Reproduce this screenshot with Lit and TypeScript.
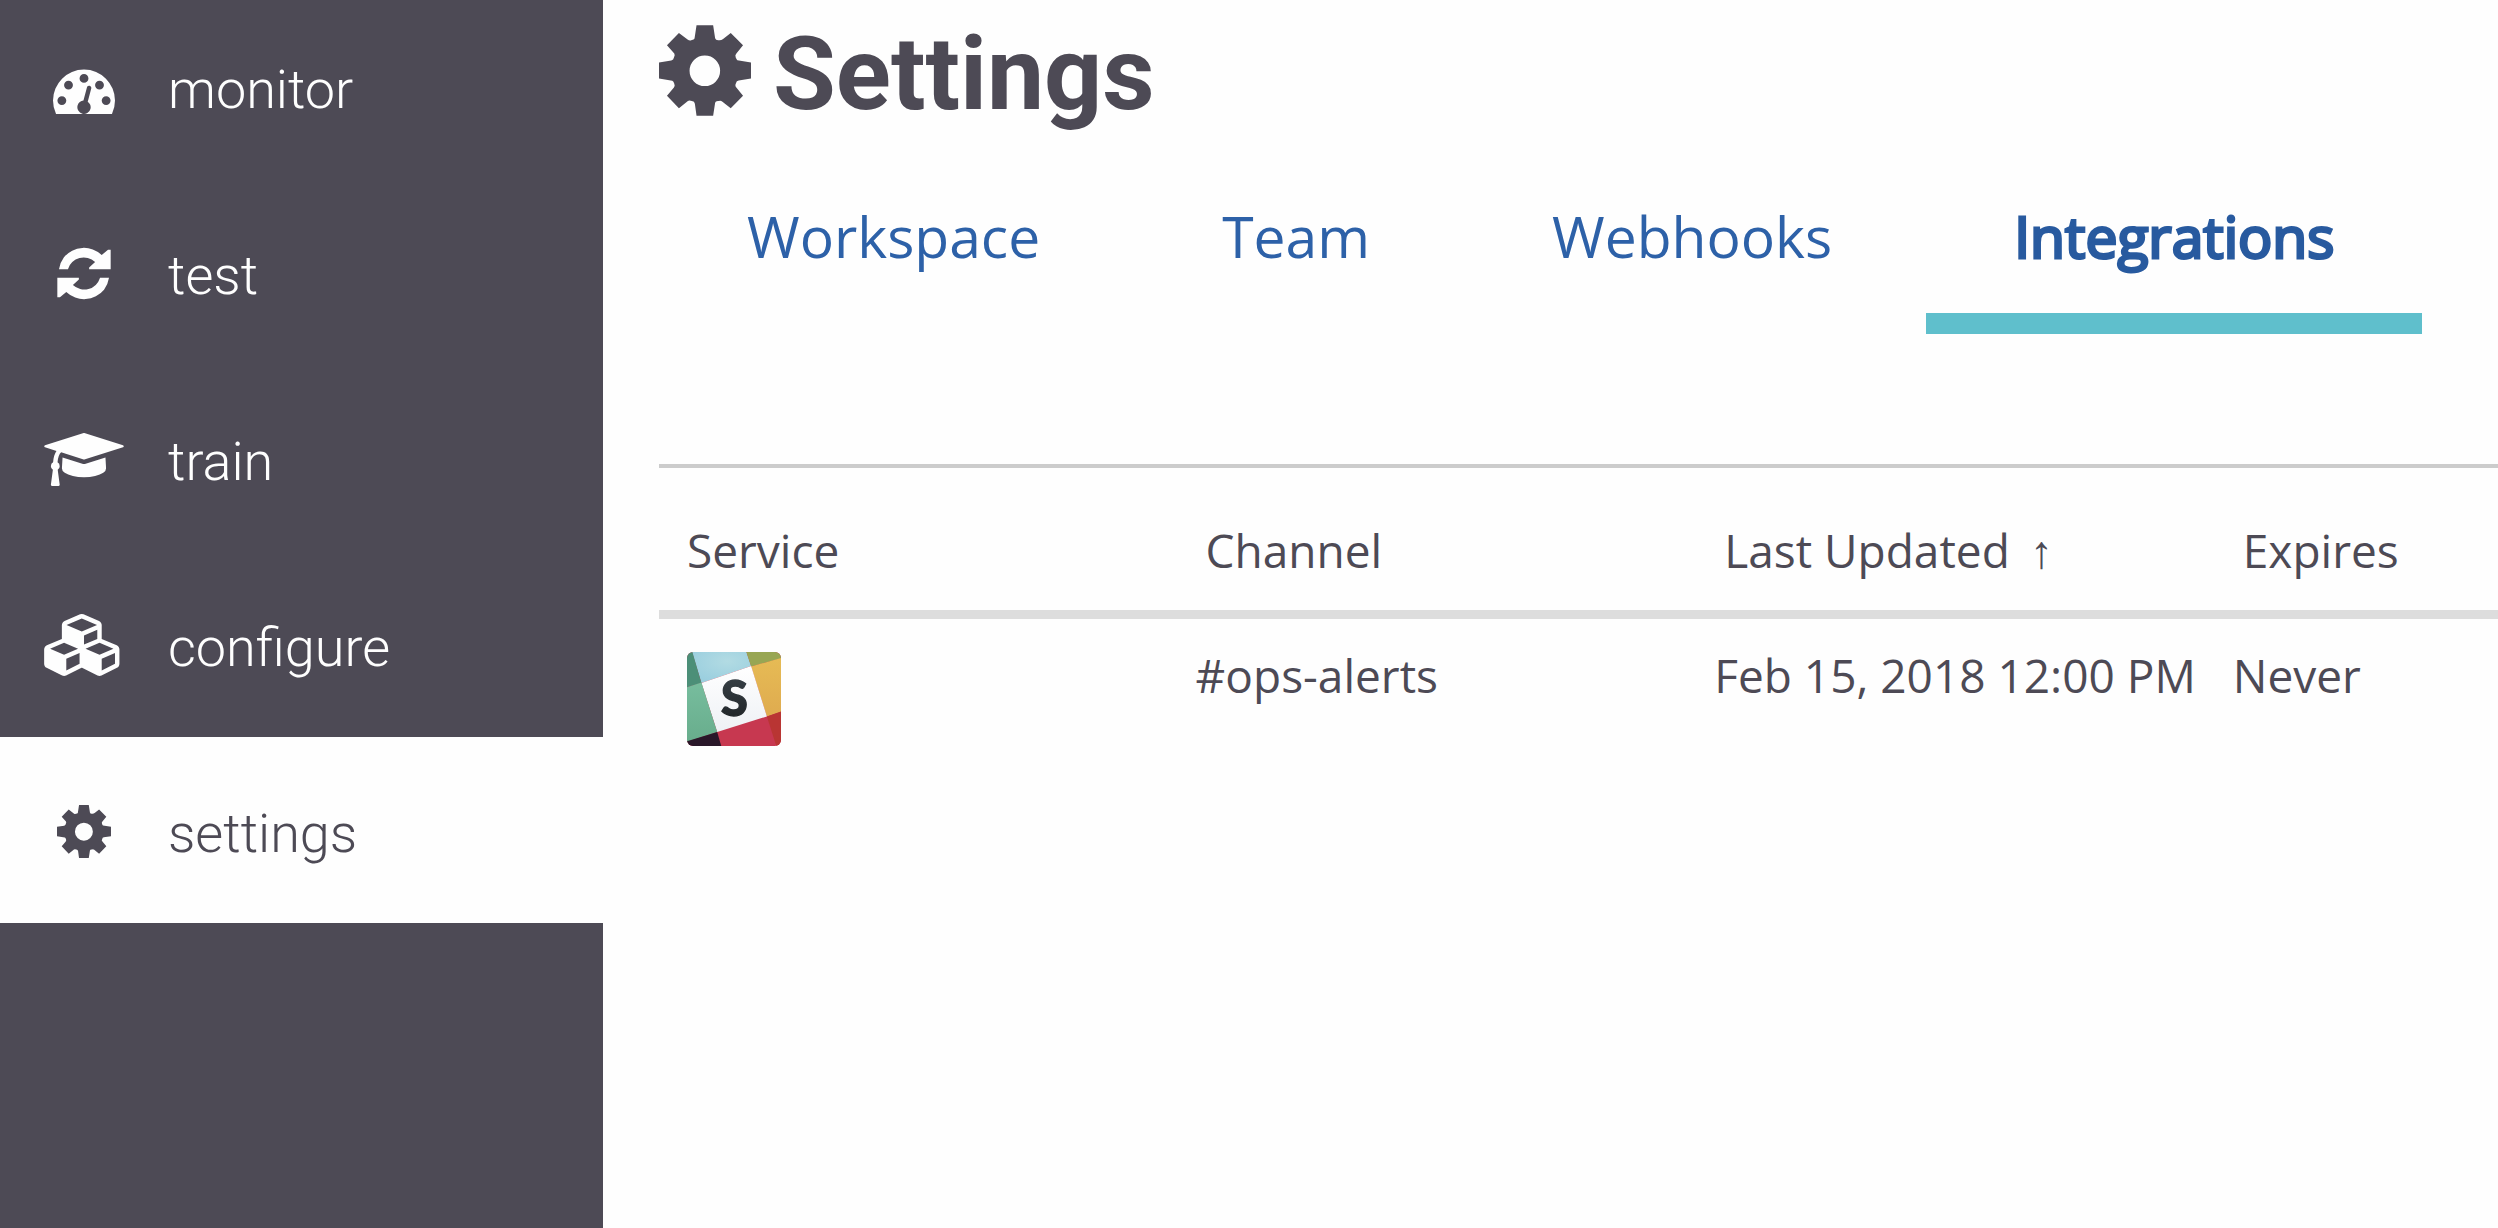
import { LitElement, html, css, svg } from "lit";
import { customElement, state } from "lit/decorators.js";
import { classMap } from "lit/directives/class-map.js";

const cogShape = svg`<path fill="currentColor" fill-rule="evenodd" d="M141 45H191L197 84Q199 91 208 90Q215 91 221 86L244 68L281 105L261 130Q256 135 259 142Q262 149 264 150L305 157V205L268 211Q261 212 260 219Q256 226 259 230L281 257L244 295L219 275Q214 271 208 273Q198 272 197 278L191 317H141L136 281Q135 274 127 273Q119 270 115 273L88 295L52 257L73 232Q77 227 74 221Q72 213 68 212L28 205V157L65 151Q72 149 73 142Q77 135 74 130L52 105L88 68L114 88Q120 92 125 90Q134 89 135 85ZM120 182A46 46 0 1 0 212 182A46 46 0 1 0 120 182Z"/>`;

const icons: Record<string, unknown> = {
  monitor: html`<svg class="glyph gauge" viewBox="0 128 1792 1408" aria-hidden="true"><path fill="currentColor" d="M384 1152q0-53-37.500-90.500t-90.500-37.500-90.500 37.500-37.500 90.500 37.500 90.500 90.500 37.500 90.500-37.500 37.500-90.500zm192-448q0-53-37.500-90.500t-90.500-37.500-90.500 37.500-37.500 90.500 37.500 90.500 90.500 37.500 90.500-37.500 37.500-90.500zm428 481l101-382q6-26-7.500-48.500t-38.500-29.500-48 6.500-30 39.500l-101 382q-60 5-107 43.500t-63 98.500q-20 77 20 146t117 89 146-20 89-117q16-60-6-117t-72-91zm660-33q0-53-37.500-90.500t-90.500-37.500-90.500 37.500-37.500 90.500 37.500 90.500 90.500 37.500 90.500-37.500 37.500-90.500zm-640-640q0-53-37.500-90.500t-90.500-37.500-90.500 37.500-37.500 90.500 37.500 90.500 90.500 37.500 90.500-37.500 37.500-90.500zm448 192q0-53-37.500-90.500t-90.500-37.500-90.500 37.500-37.500 90.500 37.500 90.500 90.500 37.500 90.500-37.500 37.500-90.500zm320 448q0 261-141 483-19 29-54 29h-1402q-35 0-54-29-141-221-141-483 0-182 71-348t191-286 286-191 348-71 348 71 286 191 191 286 71 348z"/></svg>`,
  test: html`<svg class="glyph refresh" viewBox="51 590 163 158" aria-hidden="true"><g fill="currentColor"><path d="M57 656Q60 636 72 620A78 78 0 0 1 186 613L205 597H213V656H148V651L166 634A50 50 0 0 0 84 656Z"/><path d="M208 682Q205 702 193 718A78 78 0 0 1 79 725L60 741H52V682H117V687L99 704A50 50 0 0 0 181 682Z"/></g></svg>`,
  train: html`<svg class="glyph cap" viewBox="0 128 2304 1536" aria-hidden="true"><path fill="currentColor" d="M1774 836l18 316q4 69-82 128t-235 93.500-323 34.500-323-34.500-235-93.500-82-128l18-316 574 181q22 7 48 7t48-7zm530-324q0 23-22 31l-1120 352q-4 1-10 1t-10-1l-652-206q-43 34-71 111.500t-34 178.500q63 36 63 109 0 69-58 107l58 433q2 14-8 25-9 11-24 11h-192q-15 0-24-11-10-11-8-25l58-433q-58-38-58-107 0-73 65-111 11-207 98-330l-333-104q-22-8-22-31t22-31l1120-352q4-1 10-1t10 1l1120 352q22 8 22 31z"/></svg>`,
  configure: html`<svg class="glyph cubes" viewBox="0 0 2304 1792" aria-hidden="true"><path fill="currentColor" d="M640 1632l384-192v-314l-384 164v342zm-64-454l404-173-404-173-404 173zm1088 454l384-192v-314l-384 164v342zm-64-454l404-173-404-173-404 173zm-448-293l384-165v-266l-384 164v267zm-64-379l441-189-441-189-441 189zm1088 518v416q0 36-19 67t-52 47l-448 224q-25 14-57 14t-57-14l-448-224q-5-2-7-4-2 2-7 4l-448 224q-25 14-57 14t-57-14l-448-224q-33-16-52-47t-19-67v-416q0-38 21.500-70t56.500-48l434-186v-400q0-38 21.500-70t56.500-48l448-192q23-10 50-10t50 10l448 192q35 16 56.500 48t21.500 70v400l434 186q36 16 57 48t21 70z"/></svg>`,
  settings: html`<svg class="glyph cog" viewBox="28 45 277 272" aria-hidden="true">${cogShape}</svg>`,
};

const serviceLogo = html`<svg class="logo" viewBox="55 38 280 280" role="img" aria-label="Slack">
  <defs>
    <clipPath id="tile"><rect x="55" y="38" width="280" height="280" rx="18" /></clipPath>
    <radialGradient id="sky" cx="0.6" cy="0.3" r="0.7"><stop offset="0" stop-color="#b2dbe3" /><stop offset="1" stop-color="#9bcfdf" /></radialGradient>
    <linearGradient id="gold" x1="0" y1="0" x2="0" y2="1"><stop offset="0" stop-color="#e6bb55" /><stop offset="1" stop-color="#dfab4f" /></linearGradient>
    <linearGradient id="paper" x1="0" y1="0" x2="0" y2="1"><stop offset="0" stop-color="#ffffff" /><stop offset="1" stop-color="#eef1f5" /></linearGradient>
    <linearGradient id="mint" x1="0" y1="0" x2="0" y2="1"><stop offset="0" stop-color="#77bd9e" /><stop offset="1" stop-color="#68ad8c" /></linearGradient>
    <linearGradient id="ink" x1="0" y1="0" x2="0" y2="1"><stop offset="0" stop-color="#3b444b" /><stop offset="1" stop-color="#1d2124" /></linearGradient>
  </defs>
  <g clip-path="url(#tile)">
    <rect x="55" y="38" width="280" height="280" fill="#c73850" />
    <path fill="url(#sky)" d="M70 38H232L246 80L98 130Z" />
    <path fill="#4c8f78" d="M55 38H71L98 130L55 143Z" />
    <path fill="#98a653" d="M232 38H335V57L246 81Z" />
    <path fill="url(#gold)" d="M246 81L335 56V216L293 230Z" />
    <path fill="url(#paper)" d="M98 130L246 80L293 230L145 276Z" />
    <path fill="url(#mint)" d="M55 143L98 129L145 276L55 305Z" />
    <path fill="#291729" d="M55 304L145 276L157 318H55Z" />
    <path fill="#b93533" d="M293 230L335 215V318H321Z" />
  </g>
  <text class="logo-letter" x="196" y="229" text-anchor="middle" fill="url(#ink)" stroke="url(#ink)" stroke-width="4">S</text>
</svg>`;

interface Integration {
  channel: string;
  updated: string;
  expires: string;
}

@customElement("app-root")
export class AppRoot extends LitElement {
  static styles = css`
    :host {
      display: block;
      min-height: 100vh;
      overflow: hidden;
      color: #4d4a55;
      background: #fefefe;
      font-family: "Open Sans", "Noto Sans", sans-serif;
      font-size: 46px;
      line-height: 64px;
    }
    * {
      box-sizing: border-box;
    }
    .shell {
      display: grid;
      grid-template-columns: 603px minmax(0, 1fr);
      min-height: 100vh;
    }
    .side {
      background: #4d4a55;
      overflow: hidden;
    }
    .nav {
      display: flex;
      flex-direction: column;
      margin-top: -7px;
    }
    .nav-link {
      display: flex;
      align-items: center;
      gap: 44px;
      height: 186px;
      padding: 2px 0 0 44px;
      color: #fefefe;
      font-family: Roboto, "Noto Sans", sans-serif;
      font-weight: 300;
      font-size: 54px;
      text-decoration: none;
    }
    .nav-link.active {
      background: #fefefe;
      color: #4d4a55;
    }
    .label {
      padding-top: 6px;
    }
    .icon {
      display: flex;
      align-items: center;
      justify-content: center;
      width: 80px;
      height: 72px;
    }
    .glyph {
      display: block;
      flex: none;
    }
    .gauge {
      width: 62px;
      height: 49px;
      margin-top: 4px;
    }
    .refresh {
      width: 54px;
      height: 53px;
    }
    .cap {
      width: 80px;
      height: 53px;
    }
    .cubes {
      width: 80px;
      height: 62px;
    }
    .cog {
      width: 54px;
      height: 53px;
    }
    .main {
      padding: 10px 0 0 56px;
    }
    .title {
      display: flex;
      align-items: center;
      gap: 22px;
      margin: 0;
      font-family: Roboto, "Noto Sans", sans-serif;
      font-weight: 700;
      font-size: 102px;
      line-height: 112px;
    }
    .title .cog {
      width: 92px;
      height: 91px;
    }
    .title-text {
      padding-top: 8px;
    }
    .tabs {
      display: flex;
      gap: 6px;
      margin-top: 54px;
    }
    .tab {
      padding: 14px 88px 39px;
      border: 0;
      border-bottom: 21px solid transparent;
      background: none;
      color: #2d61a8;
      font-family: inherit;
      font-size: 57px;
      line-height: 76px;
      cursor: pointer;
    }
    .tab.selected {
      border-bottom-color: #5fbfcc;
      color: #285a9f;
      -webkit-text-stroke: 3px #285a9f;
    }
    .table {
      width: 100%;
      margin-top: 130px;
      border-collapse: collapse;
      table-layout: fixed;
      border-top: 4px solid #cccccc;
    }
    .wide {
      width: 28.2%;
    }
    .table th {
      padding: 50px 0 28px 28px;
      border-bottom: 9px solid #dddddd;
      font-weight: 400;
      text-align: left;
      white-space: nowrap;
    }
    .table td {
      padding: 24px 0 0 18px;
      vertical-align: top;
      white-space: nowrap;
    }
    .table td.service {
      padding: 33px 0 0 28px;
    }
    .logo {
      display: block;
      width: 94px;
      height: 94px;
    }
    .logo-letter {
      font-family: Lato, sans-serif;
      font-weight: 900;
      font-size: 145px;
    }
    .sort {
      margin: 0;
      padding: 0;
      border: 0;
      background: none;
      color: inherit;
      font: inherit;
      cursor: pointer;
    }
    .arrow {
      margin-left: 20px;
    }
  `;

  @state() private tab = "Integrations";

  private readonly sections = ["monitor", "test", "train", "configure", "settings"];
  private readonly tabs = ["Workspace", "Team", "Webhooks", "Integrations"];
  private readonly rows: Integration[] = [
    { channel: "#ops-alerts", updated: "Feb 15, 2018 12:00 PM", expires: "Never" },
  ];

  render() {
    return html`
      <div class="shell">
        <aside class="side">
          <nav class="nav">
            ${this.sections.map(
              (name) => html`<a class=${classMap({ "nav-link": true, active: name === "settings" })} href="#${name}">
                <span class="icon">${icons[name]}</span><span class="label">${name}</span>
              </a>`
            )}
          </nav>
        </aside>
        <main class="main">
          <h1 class="title">${icons.settings}<span class="title-text">Settings</span></h1>
          <div class="tabs" role="tablist">
            ${this.tabs.map(
              (name) => html`<button
                class=${classMap({ tab: true, selected: name === this.tab })}
                role="tab"
                aria-selected=${name === this.tab}
                @click=${() => (this.tab = name)}
              >${name}</button>`
            )}
          </div>
          <table class="table">
            <colgroup><col class="wide" /><col class="wide" /><col class="wide" /><col /></colgroup>
            <thead>
              <tr>
                <th scope="col">Service</th>
                <th scope="col">Channel</th>
                <th scope="col" aria-sort="ascending"><button class="sort">Last Updated<span class="arrow">↑</span></button></th>
                <th scope="col">Expires</th>
              </tr>
            </thead>
            <tbody>
              ${this.rows.map(
                (row) => html`<tr>
                  <td class="service">${serviceLogo}</td>
                  <td>${row.channel}</td>
                  <td>${row.updated}</td>
                  <td>${row.expires}</td>
                </tr>`
              )}
            </tbody>
          </table>
        </main>
      </div>
    `;
  }
}
